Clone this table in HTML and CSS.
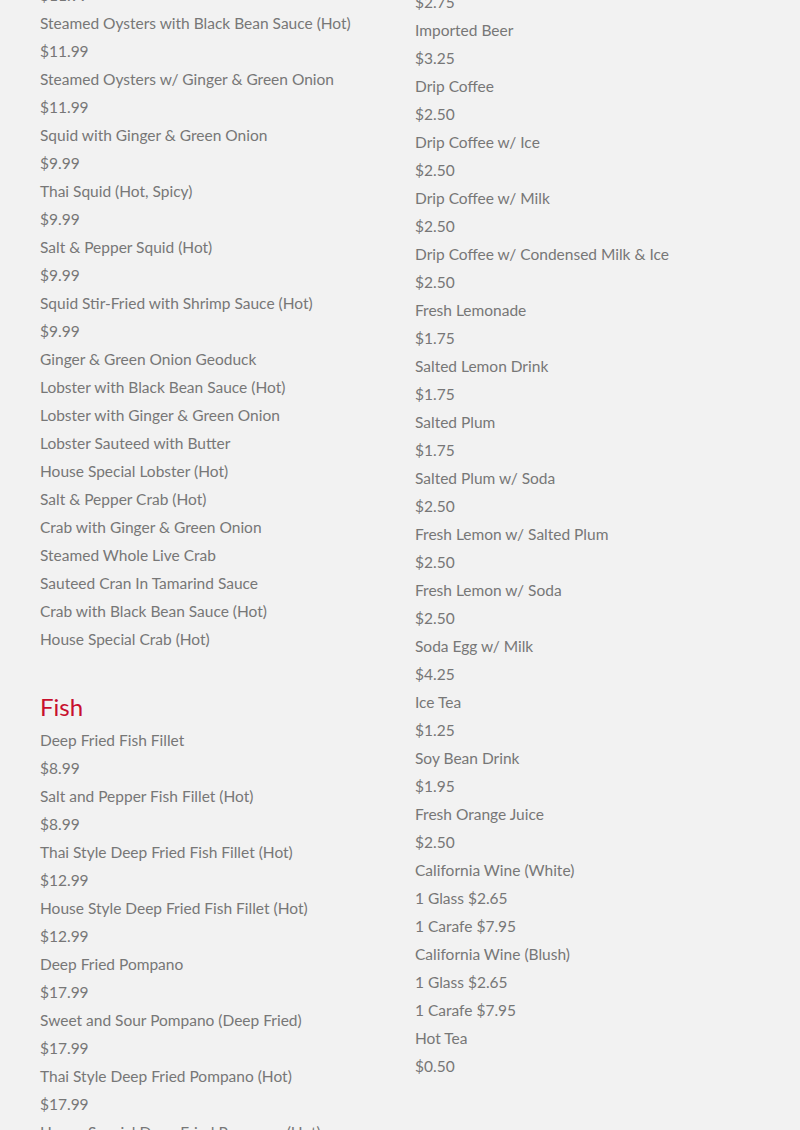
FILE: index.html
```html
<!DOCTYPE html>
<html lang="en">
<head>
<meta charset="utf-8">
<title>Menu</title>
<link rel="stylesheet" href="styles.css">
</head>
<body>
<main class="menu">
  <section class="col col-left">
    <div class="line">$11.99</div>
    <div class="line">Steamed Oysters with Black Bean Sauce (Hot)</div>
    <div class="line">$11.99</div>
    <div class="line">Steamed Oysters w/ Ginger &amp; Green Onion</div>
    <div class="line">$11.99</div>
    <div class="line">Squid with Ginger &amp; Green Onion</div>
    <div class="line">$9.99</div>
    <div class="line">Thai Squid (Hot, Spicy)</div>
    <div class="line">$9.99</div>
    <div class="line">Salt &amp; Pepper Squid (Hot)</div>
    <div class="line">$9.99</div>
    <div class="line">Squid Stir-Fried with Shrimp Sauce (Hot)</div>
    <div class="line">$9.99</div>
    <div class="line">Ginger &amp; Green Onion Geoduck</div>
    <div class="line">Lobster with Black Bean Sauce (Hot)</div>
    <div class="line">Lobster with Ginger &amp; Green Onion</div>
    <div class="line">Lobster Sauteed with Butter</div>
    <div class="line">House Special Lobster (Hot)</div>
    <div class="line">Salt &amp; Pepper Crab (Hot)</div>
    <div class="line">Crab with Ginger &amp; Green Onion</div>
    <div class="line">Steamed Whole Live Crab</div>
    <div class="line">Sauteed Cran In Tamarind Sauce</div>
    <div class="line">Crab with Black Bean Sauce (Hot)</div>
    <div class="line">House Special Crab (Hot)</div>
    <h2 class="heading">Fish</h2>
    <div class="line">Deep Fried Fish Fillet</div>
    <div class="line">$8.99</div>
    <div class="line">Salt and Pepper Fish Fillet (Hot)</div>
    <div class="line">$8.99</div>
    <div class="line">Thai Style Deep Fried Fish Fillet (Hot)</div>
    <div class="line">$12.99</div>
    <div class="line">House Style Deep Fried Fish Fillet (Hot)</div>
    <div class="line">$12.99</div>
    <div class="line">Deep Fried Pompano</div>
    <div class="line">$17.99</div>
    <div class="line">Sweet and Sour Pompano (Deep Fried)</div>
    <div class="line">$17.99</div>
    <div class="line">Thai Style Deep Fried Pompano (Hot)</div>
    <div class="line">$17.99</div>
    <div class="line">House Special Deep Fried Pompano (Hot)</div>
    <div class="line">$17.99</div>
  </section>
  <section class="col col-right">
    <div class="line">$2.75</div>
    <div class="line">Imported Beer</div>
    <div class="line">$3.25</div>
    <div class="line">Drip Coffee</div>
    <div class="line">$2.50</div>
    <div class="line">Drip Coffee w/ Ice</div>
    <div class="line">$2.50</div>
    <div class="line">Drip Coffee w/ Milk</div>
    <div class="line">$2.50</div>
    <div class="line">Drip Coffee w/ Condensed Milk &amp; Ice</div>
    <div class="line">$2.50</div>
    <div class="line">Fresh Lemonade</div>
    <div class="line">$1.75</div>
    <div class="line">Salted Lemon Drink</div>
    <div class="line">$1.75</div>
    <div class="line">Salted Plum</div>
    <div class="line">$1.75</div>
    <div class="line">Salted Plum w/ Soda</div>
    <div class="line">$2.50</div>
    <div class="line">Fresh Lemon w/ Salted Plum</div>
    <div class="line">$2.50</div>
    <div class="line">Fresh Lemon w/ Soda</div>
    <div class="line">$2.50</div>
    <div class="line">Soda Egg w/ Milk</div>
    <div class="line">$4.25</div>
    <div class="line">Ice Tea</div>
    <div class="line">$1.25</div>
    <div class="line">Soy Bean Drink</div>
    <div class="line">$1.95</div>
    <div class="line">Fresh Orange Juice</div>
    <div class="line">$2.50</div>
    <div class="line">California Wine (White)</div>
    <div class="line">1 Glass $2.65</div>
    <div class="line">1 Carafe $7.95</div>
    <div class="line">California Wine (Blush)</div>
    <div class="line">1 Glass $2.65</div>
    <div class="line">1 Carafe $7.95</div>
    <div class="line">Hot Tea</div>
    <div class="line">$0.50</div>
  </section>
</main>
</body>
</html>
```
FILE: styles.css
```css
html, body {
  margin: 0;
  padding: 0;
  height: 100%;
  overflow: hidden;
  background: #f2f2f2;
}
body {
  font-family: Lato, "Liberation Sans", sans-serif;
  font-size: 15.5px;
  color: #777777;
}
.menu {
  display: grid;
  grid-template-columns: 375px 1fr;
  align-items: start;
  padding: 0 0 0 40px;
}
.col-left {
  margin-top: -19px;
}
.col-right {
  margin-top: -12px;
}
.line {
  line-height: 28px;
  white-space: nowrap;
}
.heading {
  margin: 41px 0 6px;
  font-size: 24px;
  line-height: 26px;
  font-weight: 400;
  color: #c8102e;
}
```
